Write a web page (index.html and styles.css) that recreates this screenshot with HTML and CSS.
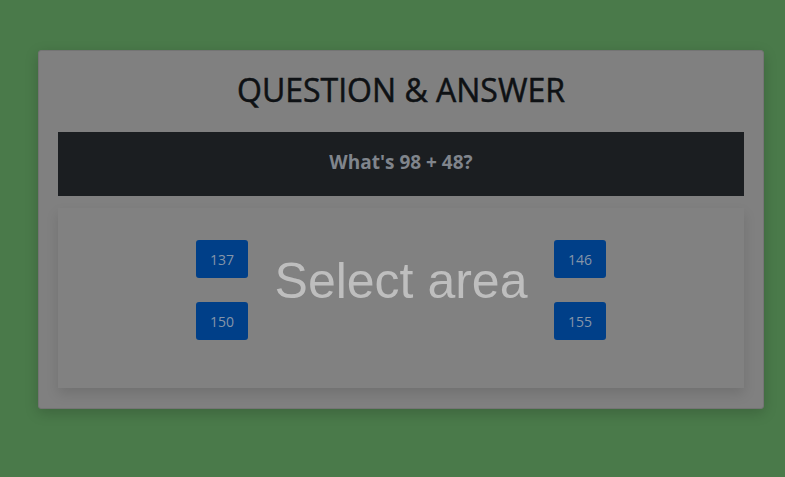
FILE: index.html
```html
<!DOCTYPE html>
<html>
<head>
<meta charset="utf-8">
<link rel="stylesheet" href="styles.css">
</head>
<body>
<div class="card">
  <h2 class="title">QUESTION &amp; ANSWER</h2>
  <div class="question">What's 98 + 48?</div>
  <div class="area">
    <div class="col">
      <button class="opt">137</button>
      <button class="opt">150</button>
    </div>
    <div class="label">Select area</div>
    <div class="col">
      <button class="opt">146</button>
      <button class="opt">155</button>
    </div>
  </div>
</div>
</body>
</html>
```
FILE: styles.css
```css
html, body {
  margin: 0;
  padding: 0;
}
body {
  background: #4a7a4a;
  width: 785px;
  height: 477px;
  overflow: hidden;
  font-family: "Open Sans", "Noto Sans", sans-serif;
}
.card {
  box-sizing: border-box;
  margin: 50px 0 0 38px;
  width: 726px;
  height: 359px;
  background: #808080;
  border: 1px solid #747474;
  border-radius: 3px;
  padding: 0 19px;
  box-shadow: 0 4px 14px rgba(0, 0, 0, 0.18);
}
.title {
  margin: 0;
  height: 81px;
  display: flex;
  align-items: center;
  justify-content: center;
  padding-bottom: 4px;
  box-sizing: border-box;
  font-size: 32px;
  font-weight: 400;
  color: #0e1114;
  -webkit-text-stroke: 0.5px #0e1114;
}
.question {
  height: 64px;
  box-sizing: border-box;
  padding-bottom: 4px;
  background: #1b1e21;
  color: #80858c;
  font-weight: 700;
  font-size: 19px;
  display: flex;
  align-items: center;
  justify-content: center;
}
.area {
  margin-top: 12px;
  height: 180px;
  box-sizing: border-box;
  background: #818181;
  box-shadow: 0 6px 12px rgba(0, 0, 0, 0.12);
  padding: 32px 138px 0;
  display: flex;
  justify-content: space-between;
  align-items: flex-start;
}
.col {
  display: flex;
  flex-direction: column;
  gap: 24px;
}
.opt {
  width: 52px;
  height: 38px;
  border: none;
  border-radius: 3px;
  background: #003f88;
  color: #8595a8;
  font-family: "Open Sans", "Noto Sans", sans-serif;
  font-size: 14px;
  padding: 0;
  cursor: pointer;
}
.label {
  margin-top: 12px;
  font-family: "Liberation Sans", Arial, sans-serif;
  font-size: 50px;
  line-height: 58px;
  color: #bebebe;
}
```
